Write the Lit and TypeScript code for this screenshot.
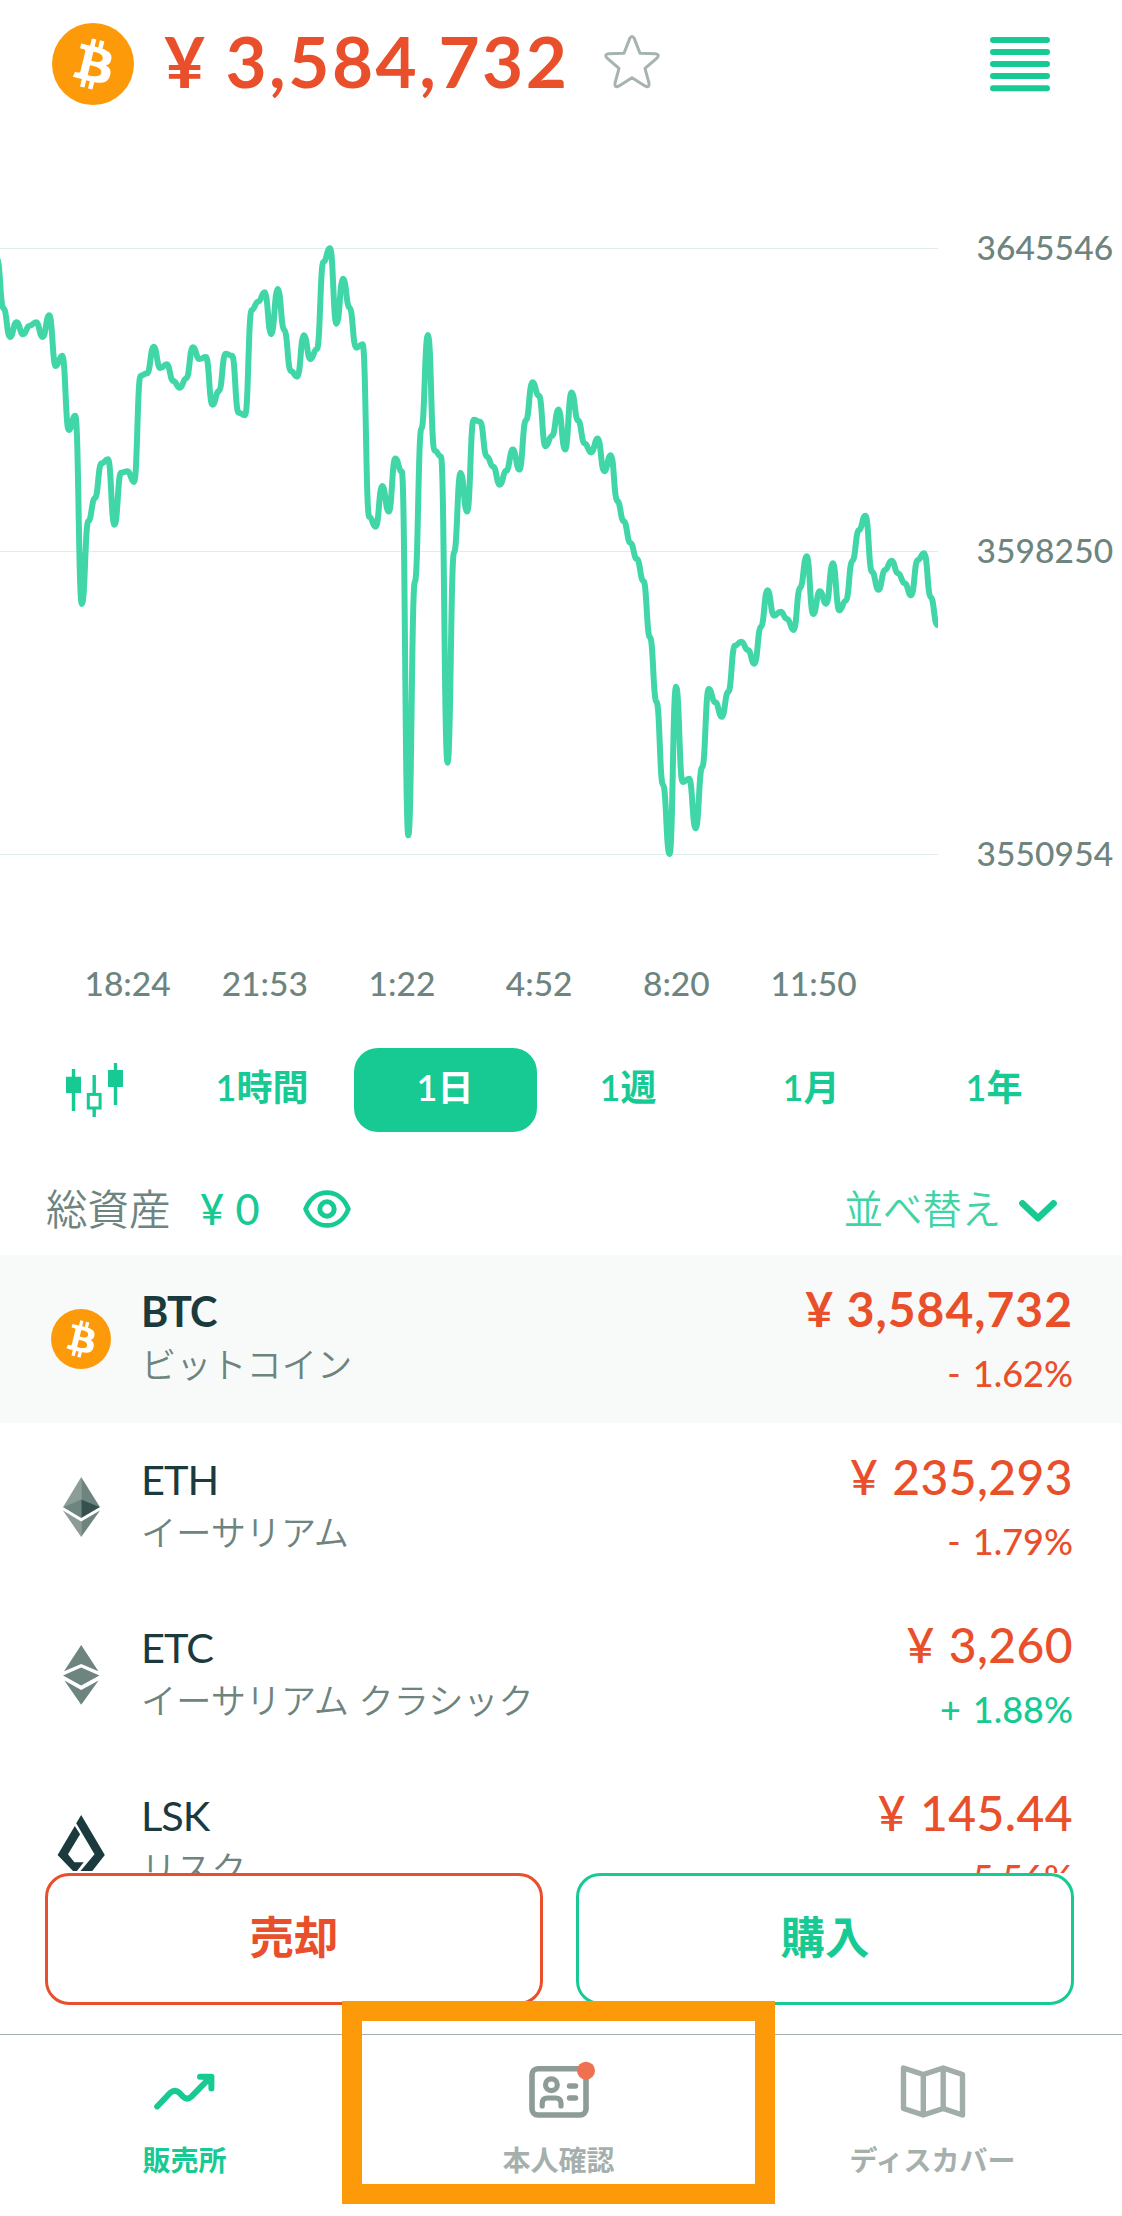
import { LitElement, html, css, svg } from "lit";
import { customElement, property } from "lit/decorators.js";
import { classMap } from "lit/directives/class-map.js";

const SERIES: number[] = [
  259, 308.3, 337, 322.3, 334.3, 325.7, 322.3, 337, 315.3, 366, 355.7, 430, 415.7, 604, 521,
  498.3, 463.3, 459.3, 524.7, 472.7, 471.3, 482, 375.7, 373.3, 346.7, 368, 364.3, 381, 387.7,
  378.3, 347.3, 359, 357, 404.7, 391, 353.7, 355.7, 412.7, 415.3, 310, 301.7, 292.3, 334.3,
  289, 330, 371, 376.7, 335.3, 359, 349, 261.7, 248.3, 323.7, 278.7, 307.7, 347.7, 344.3,
  516.7, 526.7, 486, 511.6, 458.6, 471.6, 835.3, 581.8, 428.8, 334.9, 450.4, 456.5, 762.7,
  552.4, 472.9, 511.6, 419.8, 421.8, 456.5, 466.7, 484.7, 470.8, 449.6, 469.6, 420.6, 382.2,
  395.7, 446.3, 436, 409.6, 449.6, 392.4, 420.6, 443.5, 452.4, 438.6, 471.2, 455.3, 501,
  521.3, 543, 559, 581, 637.3, 701.7, 785, 854, 686.7, 782, 778.7, 828.3, 767.3, 689, 702.3,
  716.7, 691.7, 645.7, 641.7, 650, 663.7, 626.7, 590.3, 615.7, 611.7, 619, 630, 587.7, 556.3,
  614, 591.3, 603.7, 563.3, 610.3, 600.7, 560.7, 530, 515.7, 571.7, 589.7, 570, 560.7, 573.3,
  583.3, 595.3, 560, 553.3, 597.3, 625,
];

function linePath(): string {
  const step = 6.53;
  const x0 = -3.05;
  let d = `M${x0} ${SERIES[0]}`;
  for (let i = 1; i < SERIES.length; i++) {
    const x = x0 + step * i;
    const mid = (x - step / 2).toFixed(2);
    d += `C${mid} ${SERIES[i - 1]} ${mid} ${SERIES[i]} ${x.toFixed(2)} ${SERIES[i]}`;
  }
  return d;
}

type CoinKind = "btc" | "eth" | "etc" | "lsk";

@customElement("coin-icon")
class CoinIcon extends LitElement {
  static styles = css`
    :host { display: block; }
    .art { display: block; width: 100%; height: 100%; overflow: visible; }
  `;

  @property() kind: CoinKind = "btc";

  private shapes() {
    switch (this.kind) {
      case "btc":
        return svg`
          <circle cx="16" cy="16" r="16" fill="#fd9a0a"></circle>
          <path fill="#fff" d="M23.189 14.02c.314-2.096-1.283-3.223-3.465-3.975l.708-2.84-1.728-.43-.69 2.765c-.454-.114-.92-.22-1.385-.326l.695-2.783L15.596 6l-.708 2.839c-.376-.086-.746-.17-1.104-.26l.002-.009-2.384-.595-.46 1.846s1.283.294 1.256.312c.7.175.826.638.805 1.006l-.806 3.235c.048.012.11.03.18.057l-.183-.045-1.13 4.532c-.086.212-.303.531-.793.41.018.025-1.256-.313-1.256-.313l-.858 1.978 2.25.561c.418.105.828.215 1.231.318l-.715 2.872 1.727.43.708-2.84c.472.127.93.245 1.378.357l-.706 2.828 1.728.43.715-2.866c2.948.558 5.164.333 6.097-2.333.752-2.146-.037-3.385-1.588-4.192 1.13-.26 1.98-1.003 2.207-2.538zm-3.95 5.538c-.533 2.147-4.148.986-5.32.695l.95-3.805c1.172.293 4.929.872 4.37 3.11zm.535-5.569c-.487 1.953-3.495.96-4.47.717l.86-3.45c.975.243 4.118.696 3.61 2.733z"></path>`;
      case "eth":
        return svg`<g transform="translate(0 1)">
          <path fill="#8c9d98" d="M30.2 -1V22L12 29.2z"></path>
          <path fill="#6d847f" d="M30.2 -1V22L49 29.2z"></path>
          <path fill="#6d847f" d="M30.2 21.5V40L12 29z"></path>
          <path fill="#34514f" d="M30.2 21.5V40L49 29z"></path>
          <path fill="#8c9d98" d="M12 32.5L30.2 43.5V59z"></path>
          <path fill="#6d847f" d="M49 32.5L30.2 43.5V59z"></path></g>`;
      case "etc":
        return svg`<g fill="#6d847f">
          <path d="M30.2 0L13 26.2 30.2 19 47.4 26.2z"></path>
          <path d="M12 30.4L30.2 22.6 48.4 30.4 30.2 40.6z"></path>
          <path d="M13.4 35.4L30.2 45 47.6 35.4 30.2 59.7z"></path></g>`;
      case "lsk":
        return svg`<g fill="#1b3a3e">
          <path d="M30.2 2L53.8 42 41.3 58H29.5L43.5 41.3 25.2 10.3z"></path>
          <path d="M23.8 13L29.1 21.3 17 41.3 23.4 49.3H32.7L26 58H22L6.6 42z"></path></g>`;
    }
  }

  render() {
    const box = this.kind === "btc" ? "0 0 32 32" : "0 0 60 60";
    return html`<svg class="art" viewBox=${box}>${this.shapes()}</svg>`;
  }
}

@customElement("price-chart")
class PriceChart extends LitElement {
  static styles = css`
    :host { display: block; padding-top: 100px; }
    .body { display: grid; grid-template-columns: 938px 1fr; height: 646px; }
    .plot { display: block; width: 938px; height: 646px; }
    .scale {
      display: flex; flex-direction: column; justify-content: space-between;
      padding-left: 38.5px; margin: -1px 0 1px; font-size: 33.5px; line-height: 40px;
      letter-spacing: 0.1px; font-weight: 500; color: #6d847f; white-space: nowrap;
    }
    .times {
      display: grid; grid-template-columns: repeat(6, 137.2px);
      padding: 89px 0 0 59px; font-size: 33.5px; line-height: 40px; font-weight: 500;
      text-align: center; color: #6d847f;
    }
  `;

  render() {
    return html`
      <div class="body">
        <svg class="plot" viewBox="0 228 938 646">
          <path d="M0 248.5H938M0 551.5H938M0 854.5H938" stroke="#e2edea" stroke-width="1"></path>
          <path d=${linePath()} fill="none" stroke="#40d6a8" stroke-width="6"
            stroke-linejoin="round" stroke-linecap="round"></path>
        </svg>
        <div class="scale"><span>3645546</span><span>3598250</span><span>3550954</span></div>
      </div>
      <div class="times">
        ${["18:24", "21:53", "1:22", "4:52", "8:20", "11:50"].map((t) => html`<span>${t}</span>`)}
      </div>`;
  }
}

interface Coin {
  kind: CoinKind;
  name: string;
  amount: string;
  change: string;
  up?: boolean;
  selected?: boolean;
}

@customElement("coin-row")
class CoinRow extends LitElement {
  static styles = css`
    :host { display: block; flex: none; }
    .row { display: flex; height: 168px; padding: 0 49px 0 51px; box-sizing: border-box; }
    .selected { background: #f8faf9; }
    .icon { width: 60px; height: 60px; margin-top: 54px; }
    .names { display: flex; flex-direction: column; padding: 30px 0 0 30px; line-height: 53px; }
    .code { font-size: 41.5px; font-weight: 400; color: #1b3a3e; letter-spacing: -1px; }
    .selected .code { font-weight: 700; letter-spacing: -1px; }
    .name { font-size: 35.2px; font-weight: 350; color: #6d847f; }
    .values { display: flex; flex-direction: column; align-items: flex-end; margin-left: auto; padding-top: 22px; line-height: 64px; white-space: pre; }
    .amount { font-size: 48px; font-weight: 500; color: #e94f2a; letter-spacing: 0.4px; word-spacing: 1.5px; }
    .selected .amount { font-weight: 700; letter-spacing: 1px; word-spacing: 0; }
    .change { font-size: 36px; font-weight: 500; color: #e94f2a; word-spacing: 3px; }
    .up { color: #17ca94; }
  `;

  @property({ attribute: false }) coin!: Coin;

  render() {
    const c = this.coin;
    return html`
      <div class=${classMap({ row: true, selected: !!c.selected })}>
        <coin-icon class="icon" .kind=${c.kind}></coin-icon>
        <div class="names">
          <span class="code">${c.kind.toUpperCase()}</span>
          <span class="name">${c.name}</span>
        </div>
        <div class="values">
          <span class="amount">¥ ${c.amount}</span>
          <span class=${classMap({ change: true, up: !!c.up })}>${c.change}</span>
        </div>
      </div>`;
  }
}

const COINS: Coin[] = [
  { kind: "btc", name: "ビットコイン", amount: "3,584,732", change: "- 1.62%", selected: true },
  { kind: "eth", name: "イーサリアム", amount: "235,293", change: "- 1.79%" },
  { kind: "etc", name: "イーサリアム クラシック", amount: "3,260", change: "+ 1.88%", up: true },
  { kind: "lsk", name: "リスク", amount: "145.44", change: "- 5.56%" },
];

@customElement("app-root")
class AppRoot extends LitElement {
  static styles = css`
    :host {
      display: block; position: relative; width: 1122px; height: 2216px; overflow: hidden;
      background: #fff; font-family: Lato, "Noto Sans CJK JP", sans-serif;
    }
    .header { display: flex; align-items: center; height: 128px; padding: 0 72px 0 52px; box-sizing: border-box; }
    .logo { width: 82px; height: 82px; }
    .price {
      margin-left: 30px; font-size: 71px; line-height: 80px; font-weight: 700; color: #e94f2a;
      letter-spacing: 2.5px; word-spacing: -2px; white-space: nowrap; width: 408px; padding-bottom: 6px;
    }
    .star { width: 56px; height: 56px; margin-left: 32px; margin-top: -4px; }
    .menu { width: 60px; height: 56px; margin-left: auto; }
    .star, .menu, .glyph { display: block; overflow: visible; flex: none; }

    .tabs { display: flex; height: 84px; margin-top: 45px; padding-left: 66px; }
    .candles { width: 57px; height: 54px; margin-top: 15px; margin-right: 48px; }
    .tab {
      width: 183px; display: flex; align-items: center; justify-content: center;
      font-size: 36px; font-weight: 600; line-height: 40px; color: #17ca94;
      padding: 0 1px 6px 0; box-sizing: border-box;
    }
    .tab.active { background: #17ca94; color: #fff; border-radius: 24px; }

    .assets { display: flex; align-items: center; height: 123px; padding: 30px 65px 0 46px; box-sizing: border-box; }
    .total { font-size: 41.5px; line-height: 50px; font-weight: 350; color: #6d847f; width: 124.5px; }
    .zero { font-size: 41.5px; line-height: 50px; font-weight: 500; color: #17ca94; margin-left: 29.5px; width: 72px; word-spacing: 1px; }
    .eye { width: 48px; height: 38px; margin-left: 31px; }
    .sort { margin-left: auto; font-size: 39.3px; line-height: 50px; font-weight: 350; color: #3fd4a6; }
    .chevron { width: 38px; height: 22px; margin-left: 18px; margin-top: 5px; }

    .list { display: flex; flex-direction: column; height: 618px; overflow: hidden; }
    .actions { display: flex; gap: 33px; padding: 0 48px 0 45px; height: 161px; box-sizing: border-box; }
    .action {
      flex: 1; height: 132px; border: 3px solid currentColor; border-radius: 24px; box-sizing: border-box;
      display: flex; align-items: center; justify-content: center; padding-bottom: 4px;
      font-size: 44.5px; line-height: 60px; font-weight: 700; background: #fff;
    }
    .sell { color: #e94f2a; }
    .buy { color: #17ca94; }

    .nav { display: grid; grid-template-columns: repeat(3, 374px); height: 182px; border-top: 1px solid #a6b1ad; box-sizing: border-box; }
    .item {
      display: flex; flex-direction: column; align-items: center; padding: 27px 5px 0 0;
      font-size: 28px; line-height: 36px; font-weight: 600; color: #a5b0ac;
    }
    .item.current { color: #17ca94; font-weight: 700; }
    .glyph { width: 68px; height: 60px; margin-bottom: 20px; }
    .frame {
      position: absolute; left: 342px; top: 2001px; width: 433px; height: 203px;
      border: 20px solid #fd9a0a; box-sizing: border-box;
    }
  `;

  render() {
    return html`
      <header class="header">
        <coin-icon class="logo" kind="btc"></coin-icon>
        <span class="price">¥ 3,584,732</span>
        <svg class="star" viewBox="0 0 56 56" fill="none" stroke="#a6b3af" stroke-width="3" stroke-linejoin="round">
          <path d="M25.7 4.6Q28 .6 30.3 4.6L36 19.2 51.5 19.8Q56.2 20.6 52.9 24.2L41 34.3 45 49.2Q45.6 54 41.4 52.2L28 43.8 14.6 52.2Q10.4 54 11 49.2L15 34.3 3.1 24.2Q-.2 20.6 4.5 19.8L20 19.2z"></path>
        </svg>
        <svg class="menu" viewBox="0 0 60 56" stroke="#17ca94" stroke-width="6" stroke-linecap="round">
          <path d="M3 4H57M3 16H57M3 28H57M3 40H57M3 52.2H57"></path>
        </svg>
      </header>

      <price-chart></price-chart>

      <div class="tabs">
        <svg class="candles" viewBox="0 0 57 54" fill="#17ca94">
          <path d="M5.8 6h3.4v42h-3.4zM0 13.7h15v16.3h-15zM26.5 12h3.4v18h-3.4zM26.5 46h3.4v8h-3.4zM47.8 0h3.4v42h-3.4zM42 7h15v17h-15z"></path>
          <rect x="22.3" y="31.4" width="11.8" height="13.6" fill="none" stroke="#17ca94" stroke-width="3"></rect>
        </svg>
        ${["1時間", "1日", "1週", "1月", "1年"].map(
          (t, i) => html`<span class=${classMap({ tab: true, active: i === 1 })}>${t}</span>`
        )}
      </div>

      <div class="assets">
        <span class="total">総資産</span>
        <span class="zero">¥ 0</span>
        <svg class="eye" viewBox="0 0 48 38" fill="none" stroke="#17ca94">
          <path stroke-width="4.8" stroke-linejoin="round" d="M2.6 19C6.5 9 14.4 2.6 24 2.6S41.5 9 45.4 19C41.5 29 33.6 35.4 24 35.4S6.5 29 2.6 19z"></path>
          <circle cx="24" cy="19" r="7.2" stroke-width="5"></circle>
        </svg>
        <span class="sort">並べ替え</span>
        <svg class="chevron" viewBox="0 0 38 22" fill="none" stroke="#17ca94" stroke-width="6.6" stroke-linecap="round" stroke-linejoin="round">
          <path d="M3.4 3.4L19 18.2 34.6 3.4"></path>
        </svg>
      </div>

      <div class="list">${COINS.map((c) => html`<coin-row .coin=${c}></coin-row>`)}</div>

      <div class="actions">
        <div class="action sell">売却</div>
        <div class="action buy">購入</div>
      </div>

      <nav class="nav">
        <div class="item current">
          <svg class="glyph" viewBox="0 0 68 60" fill="none" stroke="#17ca94" stroke-width="6" stroke-linecap="round" stroke-linejoin="round">
            <path d="M6.2 44.5L19 31Q24 26.6 28.6 31L32 34.6Q36.2 38.6 40.4 34.6L59 15.6M49 14.8H60.4V26.4"></path>
            <path d="M52 14.8L60.4 23.4V14.8z" fill="#17ca94" stroke-width="3"></path>
          </svg>
          販売所
        </div>
        <div class="item">
          <svg class="glyph" viewBox="0 0 68 60" fill="none" stroke="#8d9c97" stroke-width="5.6" stroke-linecap="round" stroke-linejoin="round">
            <rect x="7" y="6.7" width="54" height="46.3" rx="6"></rect>
            <circle cx="26.4" cy="22.7" r="5.9" stroke-width="5.2"></circle>
            <path stroke-width="5.2" d="M17.2 44V41.5Q17.2 36 22.5 36H30.5Q36 36 36 41.5V44"></path>
            <path d="M44.6 24H50.5M44.6 36H50.5"></path>
            <circle cx="61" cy="8.7" r="9" fill="#f0714f" stroke="none"></circle>
          </svg>
          本人確認
        </div>
        <div class="item">
          <svg class="glyph" viewBox="0 0 68 60" fill="none" stroke="#a0ada9" stroke-width="5.4" stroke-linejoin="round">
            <path d="M4.5 6L24.3 12.5 44.2 6 63.5 12.5V53L44.2 46.5 24.3 53 4.5 46.5zM24.3 13V53M44.2 6.5V46.5"></path>
          </svg>
          ディスカバー
        </div>
      </nav>
      <div class="frame"></div>`;
  }
}
